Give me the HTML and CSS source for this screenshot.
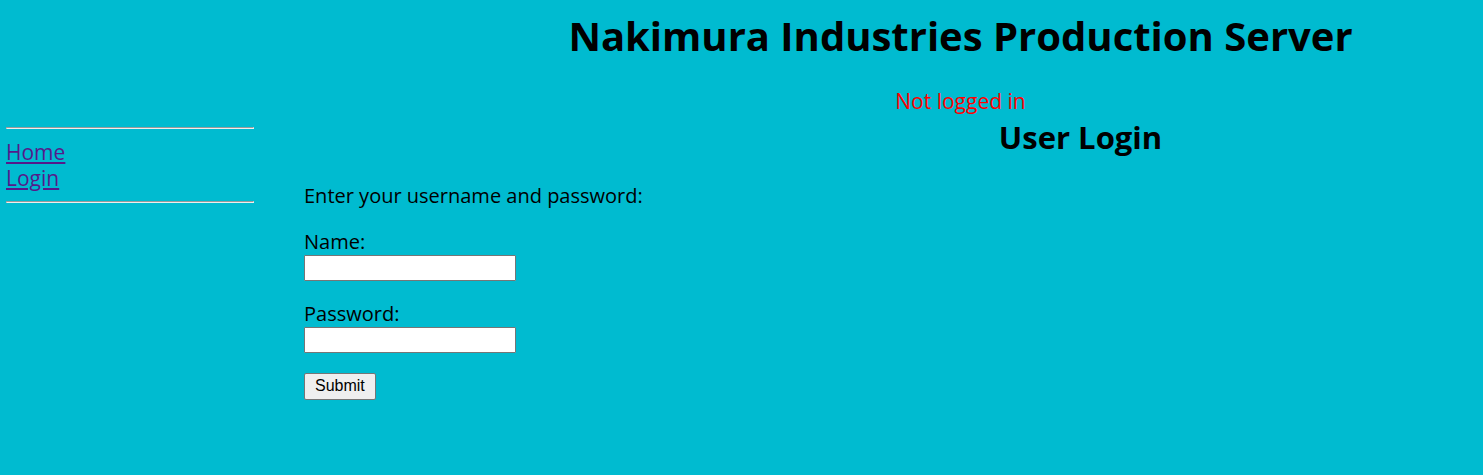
FILE: index.html
```html
<!DOCTYPE html>
<html lang="en">
<head>
<meta charset="utf-8">
<title>Nakimura Industries Production Server</title>
<link rel="stylesheet" href="styles.css">
</head>
<body>
<header class="banner">
<h1 class="site-title">Nakimura Industries Production Server</h1>
<p class="status">Not logged in</p>
</header>
<div class="columns">
<nav class="menu">
<hr class="rule">
<a class="menu-link" href="#home">Home</a>
<a class="menu-link" href="#login">Login</a>
<hr class="rule">
</nav>
<main class="content">
<h2 class="page-title">User Login</h2>
<form class="login">
<p class="intro">Enter your username and password:</p>
<div class="field">
<label for="name">Name:</label>
<input class="text-box" id="name" type="text">
</div>
<div class="field">
<label for="password">Password:</label>
<input class="text-box" id="password" type="password">
</div>
<button class="submit" type="submit">Submit</button>
</form>
</main>
</div>
</body>
</html>
```
FILE: styles.css
```css
* { box-sizing: border-box; }
body {
  margin: 0;
  background: #00bbd0;
  color: #000;
  font-family: "Segoe UI", "Open Sans", "Noto Sans", sans-serif;
  font-size: 20px;
  line-height: 26px;
}
.banner {
  padding: 8px 0 0 438px;
  text-align: center;
}
.site-title { margin: 0; font-size: 40px; line-height: 56px; }
.status { margin: 24px 0 0; color: #f00; font-size: 21px; }
.columns { display: flex; }
.menu {
  flex: none;
  display: flex;
  flex-direction: column;
  align-items: flex-start;
  width: 254px;
  padding: 13px 0 0 6px;
}
.rule { width: 100%; margin: 0; border: 1px inset #eee; }
.menu-link { color: #551a8b; font-size: 21px; }
.menu-link:first-of-type { margin-top: 10px; }
.menu-link:last-of-type { margin-bottom: 10px; }
.content { flex: 1; padding-left: 50px; }
.page-title { margin: 3px 0 0 374px; font-size: 31px; line-height: 40px; text-align: center; }
.login { display: flex; flex-direction: column; align-items: flex-start; gap: 20px; padding-top: 26px; }
.intro { margin: 0; }
.field { display: flex; flex-direction: column; }
.text-box {
  width: 212px;
  height: 26px;
  padding: 1px 2px;
  border: 1px solid #767676;
  border-radius: 1px;
  background: #fff;
  font: 16px "Liberation Sans", sans-serif;
}
.submit {
  height: 27px;
  padding: 0 10px 2px;
  border: 1px solid #767676;
  border-radius: 2px;
  background: #efefef;
  color: #000;
  font: 16px "Liberation Sans", sans-serif;
}
```
